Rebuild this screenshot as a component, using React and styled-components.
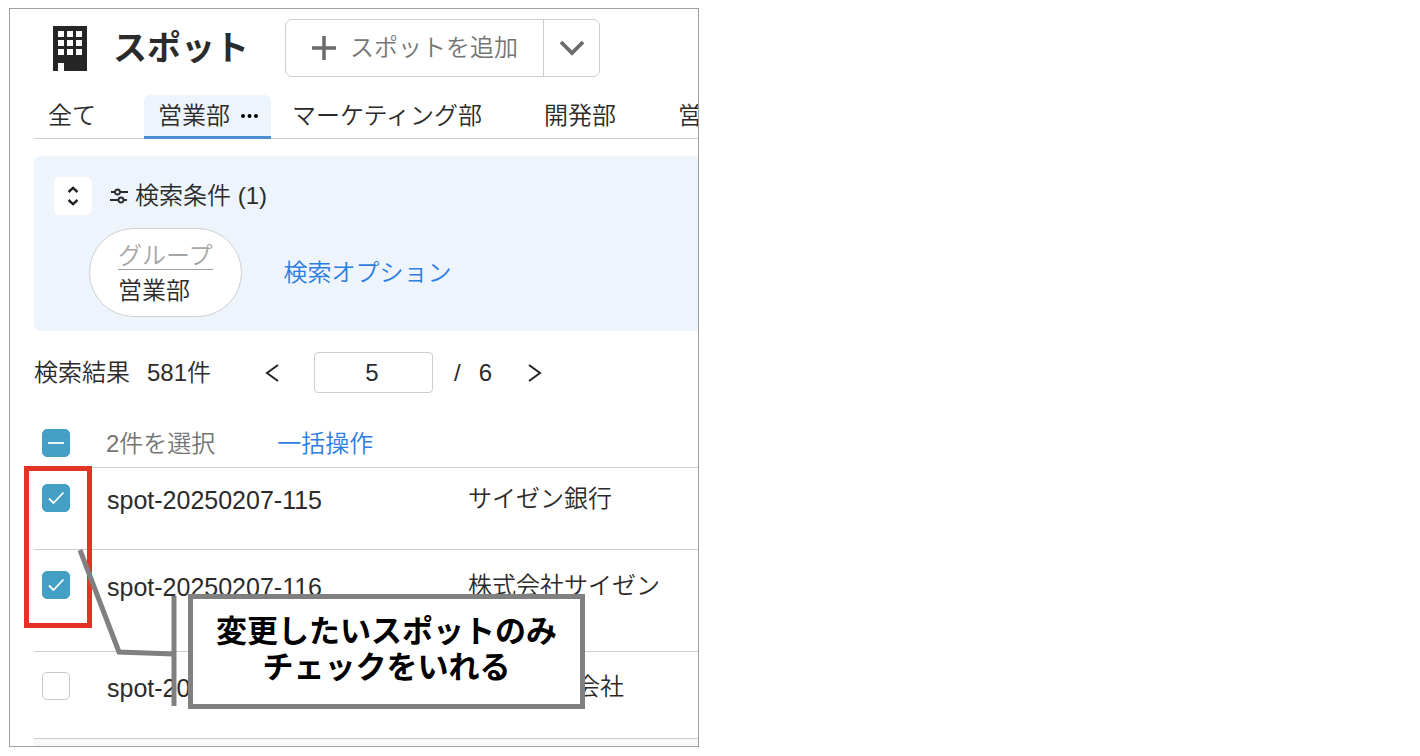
import React, {useState} from 'react';
import styled, {createGlobalStyle} from 'styled-components'


const GlobalStyle = createGlobalStyle`
  * {
    box-sizing: border-box;
  }

  body {
    margin: 0;
    background: #fff;
    color: #2b2b2b;
    font-family: "Liberation Sans", "Noto Sans CJK JP", sans-serif;
    font-size: 24px;
    font-weight: 350;
    line-height: 36px;
  }

  button, input {
    font: inherit;
    color: inherit;
  }
`

const Page = styled.div`
  display: grid;
  grid-template-columns: minmax(0, 1fr) minmax(0, 1fr);
  gap: 22px;
  padding: 8px 9px;
`

const Frame = styled.main`
  position: relative;
  overflow: hidden;
  padding-left: 24px;
  border: 1px solid #a0a0a0;
`

const Header = styled.header`
  display: flex;
  align-items: center;
  padding: 10px 0 0 19px;
`

const Title = styled.h1`
  margin: 0 36px 0 26px;
  font-size: 34px;
  font-weight: 700;
  line-height: 48px;
  white-space: nowrap;
`

const SplitButton = styled.div`
  display: flex;
  height: 58px;
  border: 1px solid #cdcdcd;
  border-radius: 7px;
  color: #757575;
`

const AddButton = styled.button`
  display: flex;
  align-items: center;
  gap: 13px;
  padding: 0 25px;
  border: 0;
  background: none;
  white-space: nowrap;
`

const MoreButton = styled.button`
  display: grid;
  place-items: center;
  width: 56px;
  padding: 0;
  border: 0;
  border-left: 1px solid #cdcdcd;
  background: none;
`

const Tabs = styled.nav`
  display: flex;
  gap: 7px;
  margin-top: 18px;
  border-bottom: 1px solid #cfcfcf;
`

const Tab = styled.a`
  display: flex;
  flex: none;
  align-items: center;
  gap: 10px;
  height: 44px;
  margin-bottom: -1px;
  padding: 0 12px 0 14px;
  border-bottom: 3px solid ${({$active}) => $active ? '#4a8fd0' : 'transparent'};
  border-radius: 6px 6px 0 0;
  background: ${({$active}) => $active ? '#edf4fc' : 'none'};
  color: inherit;
  text-decoration: none;
  white-space: nowrap;
`

const TabMenu = styled.svg`
  visibility: ${({$active}) => $active ? 'visible' : 'hidden'};
`

const SearchPanel = styled.section`
  margin-top: 17px;
  padding: 21px 20px 14px;
  border-radius: 6px 0 0 6px;
  background: #edf4fc;
`

const SearchHead = styled.div`
  display: flex;
  align-items: center;
`

const ToggleButton = styled.button`
  display: grid;
  place-items: center;
  width: 38px;
  height: 38px;
  margin-right: 18px;
  padding: 0;
  border: 0;
  border-radius: 6px;
  background: #fff;
`

const SearchTitle = styled.h2`
  margin: 0 0 0 7px;
  font-size: 24px;
  font-weight: 350;
`

const Conditions = styled.div`
  display: flex;
  align-items: center;
  gap: 42px;
  margin: 13px 0 0 35px;
`

const Pill = styled.div`
  padding: 9px 28px 7px;
  border: 1px solid #d0d0d0;
  border-radius: 45px;
  background: #fff;
`

const PillLabel = styled.div`
  height: 32px;
  border-bottom: 1px solid #a0a0a0;
  color: #a6a6a6;
`

const PillValue = styled.div`
  margin-top: 3px;
`

const Link = styled.a`
  color: #2f7de1;
  text-decoration: none;
  white-space: nowrap;
`

const Results = styled.div`
  display: flex;
  align-items: center;
  margin-top: 21px;
  white-space: nowrap;
`

const Count = styled.span`
  margin: 0 49px 0 17px;
`

const PageButton = styled.button`
  display: grid;
  place-items: center;
  width: 24px;
  height: 36px;
  padding: 0;
  border: 0;
  background: none;
`

const PageInput = styled.input`
  width: 119px;
  height: 41px;
  margin: 0 21px 0 30px;
  padding: 0 3px 0 0;
  border: 1px solid #cdcdcd;
  border-radius: 4px;
  background: #fff;
  text-align: center;
`

const PageTotal = styled.span`
  margin: 0 31px 0 18px;
`

const SelectionBar = styled.div`
  display: flex;
  align-items: center;
  height: 50px;
  margin-top: 25px;
  padding-left: 8px;
  border-bottom: 1px solid #cdcdcd;
  line-height: 30px;

  > span, > a {
    padding-top: 3px;
  }
`

const Selected = styled.span`
  margin: 0 62px 0 36px;
  color: #757575;
`

const CheckLabel = styled.label`
  display: grid;
  width: 28px;
  height: 28px;

  input, svg {
    grid-area: 1 / 1;
  }

  svg {
    pointer-events: none;
  }
`

const CheckInput = styled.input`
  appearance: none;
  width: 28px;
  height: 28px;
  margin: 0;
  border: 1px solid ${({$filled}) => $filled ? '#449fc5' : '#c8c8c8'};
  border-radius: 5px;
  background: ${({$filled}) => $filled ? '#449fc5' : '#fff'};
`

const Table = styled.table`
  width: 100%;
  border-collapse: separate;
  border-spacing: 0;
  table-layout: fixed;
`

const CheckCol = styled.col`
  width: 73px;
`

const NameCol = styled.col`
  width: 361px;
`

const Row = styled.tr`
  height: ${({$height}) => $height}px;
`

const Cell = styled.td`
  padding: ${({$top}) => $top}px 0 0 ${({$check}) => $check ? 8 : 0}px;
  border-bottom: 1px solid #cdcdcd;
  line-height: 30px;
  vertical-align: top;
  white-space: nowrap;
`

const NameCell = styled(Cell)`
  font-size: 25px;
  line-height: 32px;
`

const TableEnd = styled.div`
  height: 7px;
  background: #f8f8f8;
`

const Highlight = styled.div`
  position: absolute;
  top: 457px;
  left: 14px;
  width: 68px;
  height: 162px;
  border: 5px solid #e23325;
  pointer-events: none;
`

const Leader = styled.svg`
  position: absolute;
  top: 537px;
  left: 62px;
  pointer-events: none;
`

const Callout = styled.div`
  position: absolute;
  top: 585px;
  left: 178px;
  padding: 15px 23px 18px;
  border: 5px solid #808080;
  background: #fff;
  color: #000;
  font-size: 31px;
  font-weight: 700;
  line-height: 36px;
  text-align: center;
  white-space: nowrap;
`

const TABS = ['全て', '営業部', 'マーケティング部', '開発部', '営業部']

const SPOTS = [
    {name: 'spot-20250207-115', company: 'サイゼン銀行', height: 82, top: 16},
    {name: 'spot-20250207-116', company: '株式会社サイゼン', height: 102, top: 21},
    {name: 'spot-20250207-117', company: 'Sizen株式会社', height: 87, top: 20},
]

const BuildingIcon = () => (
    <svg width="34" height="45" viewBox="0 0 34 45" aria-hidden="true">
        <path fill="#262626" fillRule="evenodd" d="M0 0h34v45H11v-8H5v8H0z
          M5 5v6h6V5z M14 5v6h6V5z M23 5v6h6V5z
          M5 14v6h6v-6z M14 14v6h6v-6z M23 14v6h6v-6z
          M5 23v6h6v-6z M14 23v6h6v-6z M23 23v6h6v-6z"/>
    </svg>
)

const SlidersIcon = () => (
    <svg width="18" height="18" viewBox="0 0 18 18" fill="none" stroke="#2b2b2b" strokeWidth="1.8" aria-hidden="true">
        <path d="M1 5h4M10 5h8M0 13h8M14 13h3"/>
        <circle cx="7.5" cy="5" r="2.5"/>
        <circle cx="11" cy="13" r="2.5"/>
    </svg>
)

const Check = ({label, checked, mixed, onChange}) => (
    <CheckLabel>
        <CheckInput type={'checkbox'}
                    aria-label={label}
                    checked={checked}
                    onChange={onChange}
                    $filled={checked || mixed}
        />
        {(checked || mixed) &&
            <svg width="28" height="28" viewBox="0 0 28 28" fill="none" stroke="#fff" strokeWidth="1.8" aria-hidden="true">
                <path d={mixed ? 'M6 14h16' : 'M7 14.5l4.5 4.5L21.5 8.5'}/>
            </svg>
        }
    </CheckLabel>
)

const App = () => {
    const [checked, setChecked] = useState([true, true, false])
    const [page, setPage] = useState('5')

    const selectedCount = checked.filter(Boolean).length
    const allChecked = selectedCount === checked.length

    const toggle = (index) => {
        setChecked((checked) => checked.map((value, i) => i === index ? !value : value))
    }

    return (
        <Page>
            <GlobalStyle/>
            <Frame>
                <Header>
                    <BuildingIcon/>
                    <Title>スポット</Title>
                    <SplitButton>
                        <AddButton type={'button'}>
                            <svg width="26" height="26" viewBox="0 0 26 26" stroke="#6b6b6b" strokeWidth="3.5" aria-hidden="true">
                                <path d="M1 13h24M13 1v24"/>
                            </svg>
                            スポットを追加
                        </AddButton>
                        <MoreButton type={'button'} aria-label={'その他'}>
                            <svg width="26" height="16" viewBox="0 0 26 16" fill="none" stroke="#6b6b6b" strokeWidth="3.8" aria-hidden="true">
                                <path d="M2 2l11 11L24 2"/>
                            </svg>
                        </MoreButton>
                    </SplitButton>
                </Header>

                <Tabs>
                    {TABS.map((tab, index) => (
                        <Tab key={index} href={'#'} $active={index === 1}>
                            {tab}
                            <TabMenu width="19" height="6" viewBox="0 0 19 6" $active={index === 1} aria-hidden="true">
                                <circle cx="3" cy="3" r="2"/>
                                <circle cx="9.5" cy="3" r="2"/>
                                <circle cx="16" cy="3" r="2"/>
                            </TabMenu>
                        </Tab>
                    ))}
                </Tabs>

                <SearchPanel>
                    <SearchHead>
                        <ToggleButton type={'button'} aria-label={'開閉'}>
                            <svg width="12" height="20" viewBox="0 0 12 20" fill="none" stroke="#222" strokeWidth="2.4" aria-hidden="true">
                                <path d="M1.5 6L6 1.8L10.5 6M1.5 14L6 18.2L10.5 14"/>
                            </svg>
                        </ToggleButton>
                        <SlidersIcon/>
                        <SearchTitle>検索条件 (1)</SearchTitle>
                    </SearchHead>
                    <Conditions>
                        <Pill>
                            <PillLabel>グループ</PillLabel>
                            <PillValue>営業部</PillValue>
                        </Pill>
                        <Link href={'#'}>検索オプション</Link>
                    </Conditions>
                </SearchPanel>

                <Results>
                    <span>検索結果</span>
                    <Count>581件</Count>
                    <PageButton type={'button'} aria-label={'前へ'}>
                        <svg width="14" height="18" viewBox="0 0 14 18" fill="none" stroke="#222" strokeWidth="2" aria-hidden="true">
                            <path d="M13 1L2 9l11 8"/>
                        </svg>
                    </PageButton>
                    <PageInput type={'text'}
                               aria-label={'ページ'}
                               value={page}
                               onChange={(e) => setPage(e.target.value)}
                    />
                    <span>/</span>
                    <PageTotal>6</PageTotal>
                    <PageButton type={'button'} aria-label={'次へ'}>
                        <svg width="14" height="18" viewBox="0 0 14 18" fill="none" stroke="#222" strokeWidth="2" aria-hidden="true">
                            <path d="M1 1l11 8l-11 8"/>
                        </svg>
                    </PageButton>
                </Results>

                <SelectionBar>
                    <Check label={'全て選択'}
                           checked={allChecked}
                           mixed={selectedCount > 0 && !allChecked}
                           onChange={() => setChecked(checked.map(() => !allChecked))}
                    />
                    <Selected>{selectedCount}件を選択</Selected>
                    <Link href={'#'}>一括操作</Link>
                </SelectionBar>

                <Table>
                    <colgroup>
                        <CheckCol/>
                        <NameCol/>
                        <col/>
                    </colgroup>
                    <tbody>
                        {SPOTS.map((spot, index) => (
                            <Row key={spot.name} $height={spot.height}>
                                <Cell $check $top={spot.top}>
                                    <Check label={spot.name}
                                           checked={checked[index]}
                                           onChange={() => toggle(index)}
                                    />
                                </Cell>
                                <NameCell $top={spot.top}>{spot.name}</NameCell>
                                <Cell $top={spot.top}>{spot.company}</Cell>
                            </Row>
                        ))}
                    </tbody>
                </Table>
                <TableEnd/>

                <Highlight/>
                <Leader width="110" height="165" viewBox="0 0 110 165" fill="none" stroke="#808080" strokeWidth="5" aria-hidden="true">
                    <path d="M8 4L47 106L102 108M102 50V160"/>
                </Leader>
                <Callout>
                    変更したいスポットのみ<br/>チェックをいれる
                </Callout>
            </Frame>
        </Page>
    )
}

export default App;
